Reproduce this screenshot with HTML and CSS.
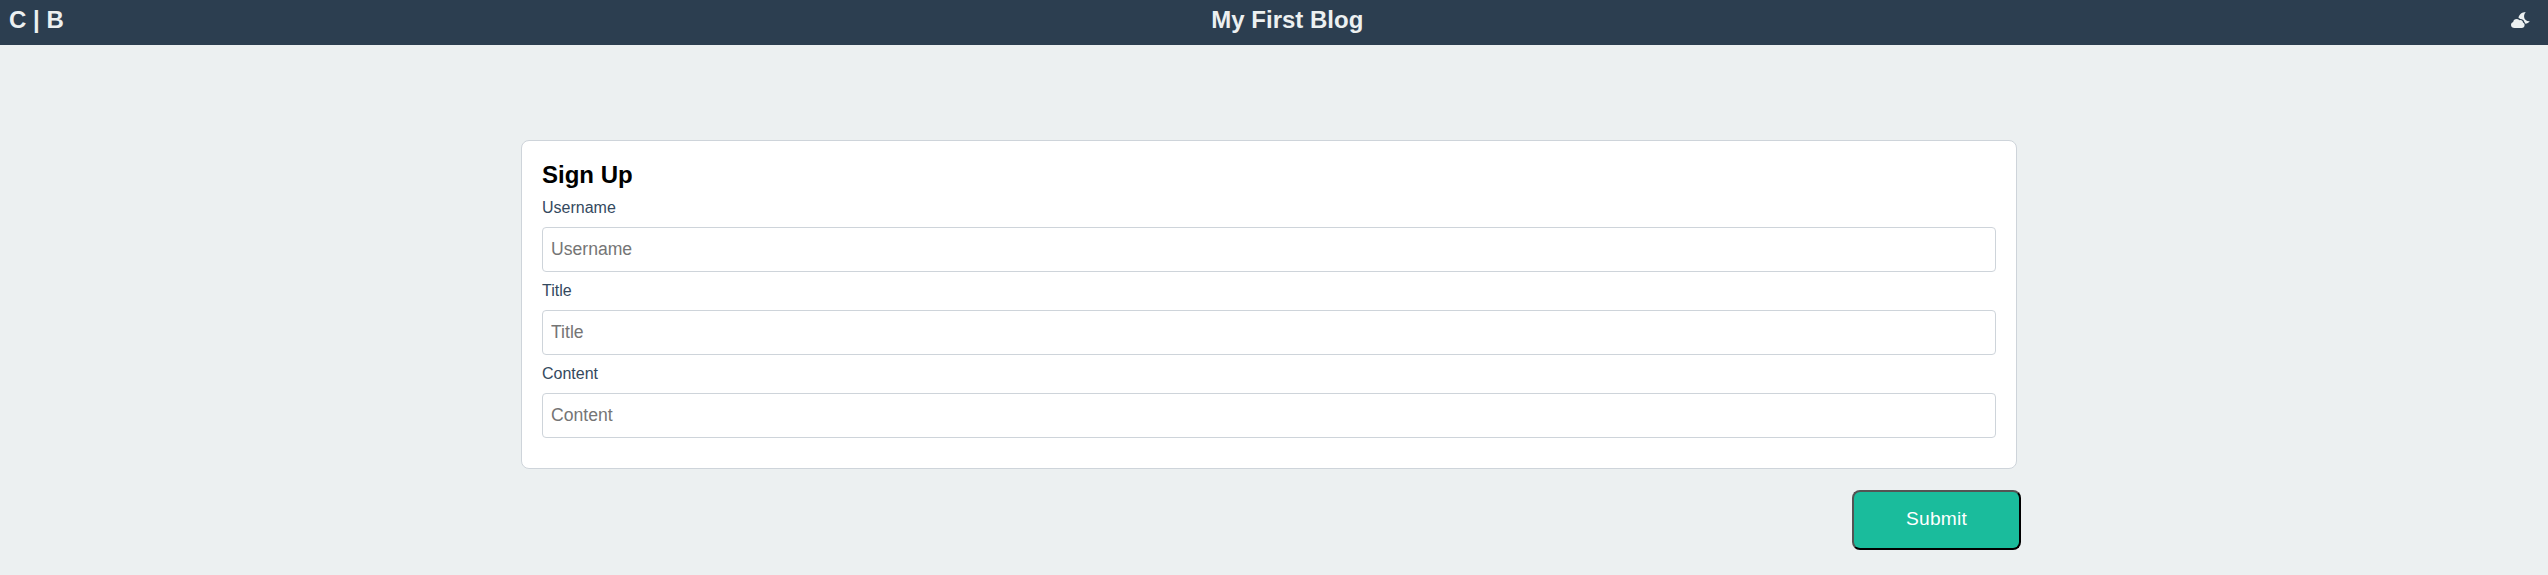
FILE: index.html
```html
<!DOCTYPE html>
<html lang="en">
<head>
<meta charset="utf-8">
<title>My First Blog</title>
<link rel="stylesheet" href="styles.css">
</head>
<body>
<header class="header">
  <h2 class="logo">C | B</h2>
  <h2 class="title">My First Blog</h2>
  <svg class="theme-icon" width="20" height="18" viewBox="0 0 20 18" fill="currentColor" aria-hidden="true">
    <path d="M3.6 17C1.5 17 0 15.7 0 13.9C0 12.5 .9 11.4 2.2 11C2.3 9.1 3.8 8 5.6 8C6.8 8 7.7 8.4 8.4 9.2C10.5 8.7 11.9 9.9 12 11.6C13 12 13.6 12.9 13.6 13.9C13.6 15.7 12.4 17 10.6 17Z"/>
    <path d="M14.8 1C10.8 1.2 7.8 3.6 7.5 7C8.2 7.2 8.7 7.5 9.1 7.9C11.4 7.7 13.1 9.1 13.3 10.9C13.8 11.4 14.2 12 14.4 12.7C16 12.6 17.7 11.7 18.8 10.2C15.8 10.5 13.3 8.5 13.1 6C13 4 13.6 2.3 14.8 1Z"/>
  </svg>
</header>
<main>
  <form class="form">
    <section class="card">
      <h2 class="heading">Sign Up</h2>
      <label class="label" for="username">Username</label>
      <input class="input" id="username" type="text" placeholder="Username">
      <label class="label" for="title">Title</label>
      <input class="input" id="title" type="text" placeholder="Title">
      <label class="label" for="content">Content</label>
      <input class="input" id="content" type="text" placeholder="Content">
    </section>
    <button class="submit" type="button">Submit</button>
  </form>
</main>
</body>
</html>
```
FILE: styles.css
```css
* {
  box-sizing: border-box;
  margin: 0;
  padding: 0;
}

body {
  min-height: 100vh;
  background: #ecf0f1;
  font-family: "Liberation Sans", Arial, sans-serif;
}

.header {
  display: flex;
  justify-content: space-between;
  align-items: flex-start;
  height: 45px;
  padding: 6px 17px 0 9px;
  background: #2c3e50;
  color: #ecf0f1;
}

.logo,
.title {
  font-size: 24px;
  line-height: 28px;
}

.theme-icon {
  margin-top: 5px;
}

.form {
  display: flex;
  flex-direction: column;
  width: 1500px;
  margin: 95px 0 0 521px;
}

.card {
  display: flex;
  flex-direction: column;
  width: 1496px;
  height: 329px;
  padding: 20px;
  background: #fff;
  border: 1px solid #ced4da;
  border-radius: 8px;
}

.heading {
  color: #000;
  font-size: 24px;
  line-height: 28px;
}

.label {
  height: 38px;
  padding-top: 10px;
  color: #34495e;
  font-size: 16px;
  line-height: 18px;
}

.input {
  width: 100%;
  height: 45px;
  padding: 0 8px;
  background: #fff;
  border: 1px solid #ced4da;
  border-radius: 4px;
  font-family: inherit;
  font-size: 17.6px;
}

.input::placeholder {
  color: #757575;
}

.submit {
  align-self: flex-end;
  width: 169px;
  height: 60px;
  margin-top: 21px;
  padding-bottom: 2px;
  background: #1abc9c;
  border: 2px outset #000;
  border-radius: 8px;
  color: #fff;
  font-family: inherit;
  font-size: 19.2px;
  letter-spacing: 0.2px;
}
```
